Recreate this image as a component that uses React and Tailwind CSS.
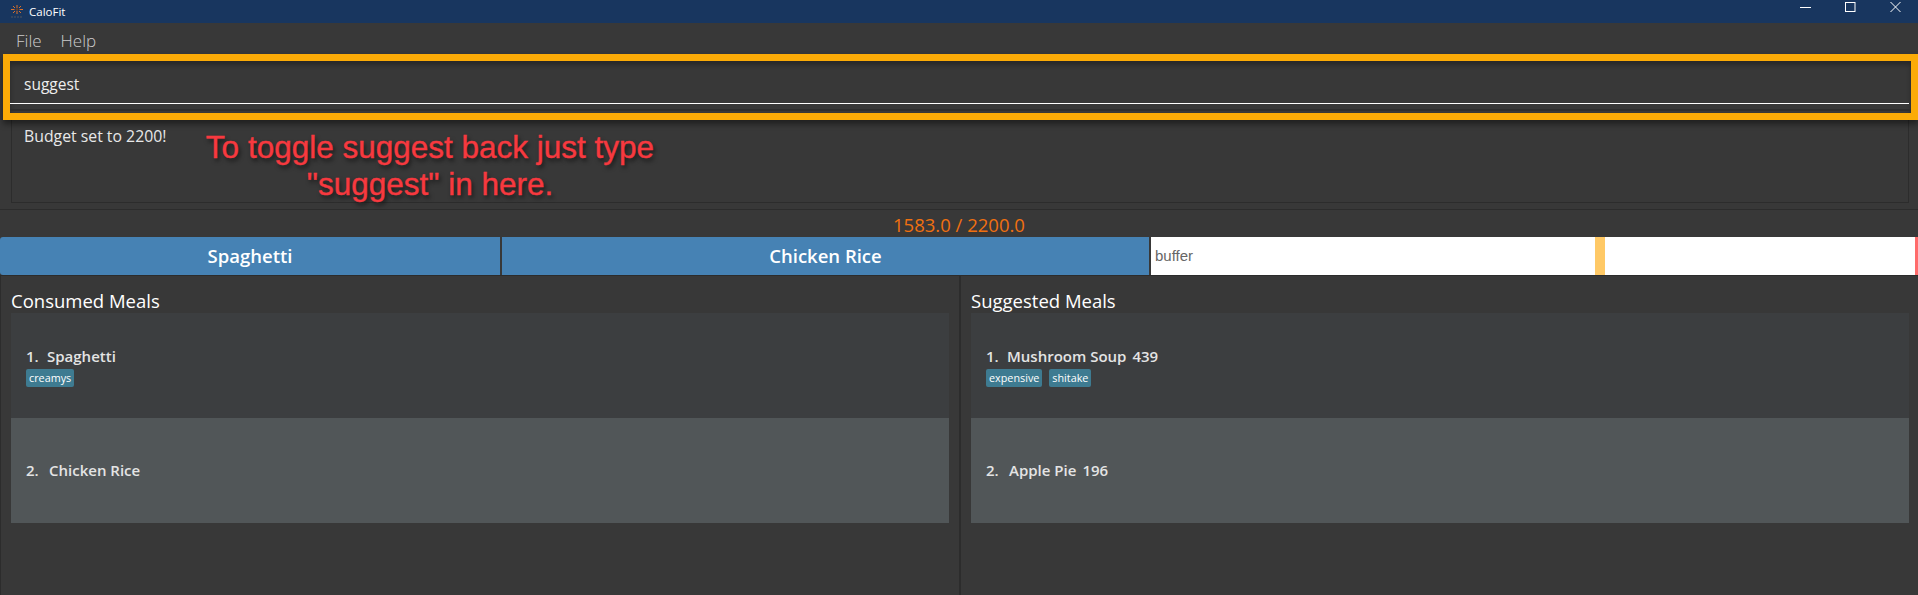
import React from "react";

const font = { sans: "font-['Open_Sans','Noto_Sans',sans-serif]" };

const Tag = ({ children }) => (
  <span className="h-[18px] px-[3px] rounded-[2px] bg-[#3e7b91] text-white text-[10.800px] leading-[18px]">
    {children}
  </span>
);

const MealRow = ({ index, name, calories, tags, alt }) => (
  <div className={`h-[105px] pl-[15px] flex flex-col justify-center ${alt ? "bg-[#515658] pb-[1px]" : "bg-[#3c3e40]"}`}>
    <div className="text-[15px] leading-[20px] font-semibold text-[#e4e4e4] flex">
      <span className={index === 1 ? "w-[21px]" : "w-[23px]"}>{index}.</span>
      <span>{name}</span>
      {calories && <span className="ml-[6px]">{calories}</span>}
    </div>
    {tags && (
      <div className="flex gap-[7px] mt-[3px] mb-[-1px]">
        {tags.map((t) => (
          <Tag key={t}>{t}</Tag>
        ))}
      </div>
    )}
  </div>
);

const MealPanel = ({ title, meals, className }) => (
  <div className={`flex flex-col ${className}`}>
    <div className="h-[37px] pt-[12px] text-[18.500px] leading-[26px] text-white whitespace-nowrap">{title}</div>
    {meals.map((m, i) => (
      <MealRow key={m.name} index={i + 1} alt={i % 2 === 1} {...m} />
    ))}
  </div>
);

const Logo = () => (
  <svg width="16" height="16" viewBox="0 0 16 16" className="ml-[9px] mr-[4px]">
    <g stroke="#d9702a" strokeWidth="1">
      <path d="M8 1v3M8 7v3M2 5.500h3.500M10.500 5.500H14M4 2l2 2M10 7l2 2M12 2l-2 2M6 7L4 9" />
    </g>
    <circle cx="8" cy="5.500" r="1.200" fill="#6b3f26" />
    <path d="M2 13h12" stroke="#33455f" strokeWidth="2" strokeDasharray="2 1" />
  </svg>
);

const WindowControls = () => (
  <div className="ml-auto flex items-start pt-[2px] h-full">
    <svg width="11" height="10" viewBox="0 0 11 10" className="mr-[34px]">
      <path d="M0 5.500h11" stroke="#fff" strokeWidth="1" />
    </svg>
    <svg width="11" height="10" viewBox="0 0 11 10" className="mr-[34px]">
      <rect x="0.500" y="0.500" width="9.500" height="9" fill="none" stroke="#fff" strokeWidth="1" />
    </svg>
    <svg width="11" height="10" viewBox="0 0 11 10" className="mr-[17px]">
      <path d="M0.500 0l10 10M10.500 0l-10 10" stroke="#fff" strokeWidth="1" />
    </svg>
  </div>
);

export default function App() {
  return (
    <div className={`relative w-[1918px] h-[595px] overflow-hidden bg-[#383838] flex flex-col ${font.sans}`}>
      <div className="h-[23px] bg-[#18365f] flex items-center shrink-0">
        <Logo />
        <span className="text-[11.500px] text-white">CaloFit</span>
        <WindowControls />
      </div>

      <div className="h-[31px] flex items-center pt-[4px] pl-[16px] gap-[19px] text-[17px] text-[#cccccc] font-light shrink-0">
        <span>File</span>
        <span>Help</span>
      </div>

      {/* annotated command box */}
      <div className="relative z-10 h-[66px] ml-[3px] border-[7px] border-[#fbab07] shadow-[0_4px_6px_rgba(0,0,0,0.45)] shrink-0">
        <div className="h-full flex flex-col shadow-[inset_0_4px_5px_rgba(0,0,0,0.3)]">
          <div className="h-[42px] pl-[14px] pt-[13px] text-[15.500px] leading-[20px] text-[#eeeeee]">suggest</div>
          <div className="h-[1px] mr-[2px] bg-white" />
          <div className="mt-[5px] h-[2px] bg-[#2e2e2e]" />
        </div>
      </div>

      <div className="h-[83px] ml-[11px] mr-[9px] border border-t-0 border-[#2c2c2c] pl-[12px] pt-[6px] text-[15.800px] leading-[20px] text-[#e8e8e8] shrink-0">
        Budget set to 2200!
      </div>

      <div className="h-[34px] mt-[6px] border-t border-[#2c2c2c] text-center text-[18.500px] leading-[28px] pt-[1px] text-[#f07010] shrink-0">
        1583.0 / 2200.0
      </div>

      <div className="h-[38px] flex shrink-0 mt-[-6px] text-white text-[18.500px] font-semibold">
        <div className="w-[500px] rounded-l-[3px] bg-[#4682b4] flex items-center justify-center">Spaghetti</div>
        <div className="w-[647px] ml-[2px] bg-[#4682b4] flex items-center justify-center">Chicken Rice</div>
        <div className="flex-1 ml-[2px] flex bg-white">
          <div className="w-[444px] flex items-center pl-[4px] text-[15px] font-normal text-[#666666] font-['Liberation_Sans',sans-serif]">buffer</div>
          <div className="w-[10px] bg-[#ffc966]" />
          <div className="flex-1" />
          <div className="w-[3px] bg-[#ff6b6b]" />
        </div>
      </div>

      <div className="flex-1 flex border-t border-[#2c2c2c] border-l">
        <MealPanel
          className="w-[960px] pl-[10px] pr-[10px] border-r-2 border-[#2c2c2c]"
          title="Consumed Meals"
          meals={[
            { name: "Spaghetti", tags: ["creamys"] },
            { name: "Chicken Rice" },
          ]}
        />
        <MealPanel
          className="flex-1 pl-[10px] pr-[9px]"
          title="Suggested Meals"
          meals={[
            { name: "Mushroom Soup", calories: "439", tags: ["expensive", "shitake"] },
            { name: "Apple Pie", calories: "196" },
          ]}
        />
      </div>

      {/* red note drawn on top of the screenshot */}
      <div className="absolute z-20 left-[185px] top-[129px] w-[490px] text-center text-[31.500px] leading-[37px] text-[#f7393f] [-webkit-text-stroke:0.4px_#f7393f] font-['Liberation_Sans',sans-serif] [text-shadow:2px_3px_4px_rgba(0,0,0,0.6)]">
        To toggle suggest back just type
        <br />
        "suggest" in here.
      </div>
    </div>
  );
}
